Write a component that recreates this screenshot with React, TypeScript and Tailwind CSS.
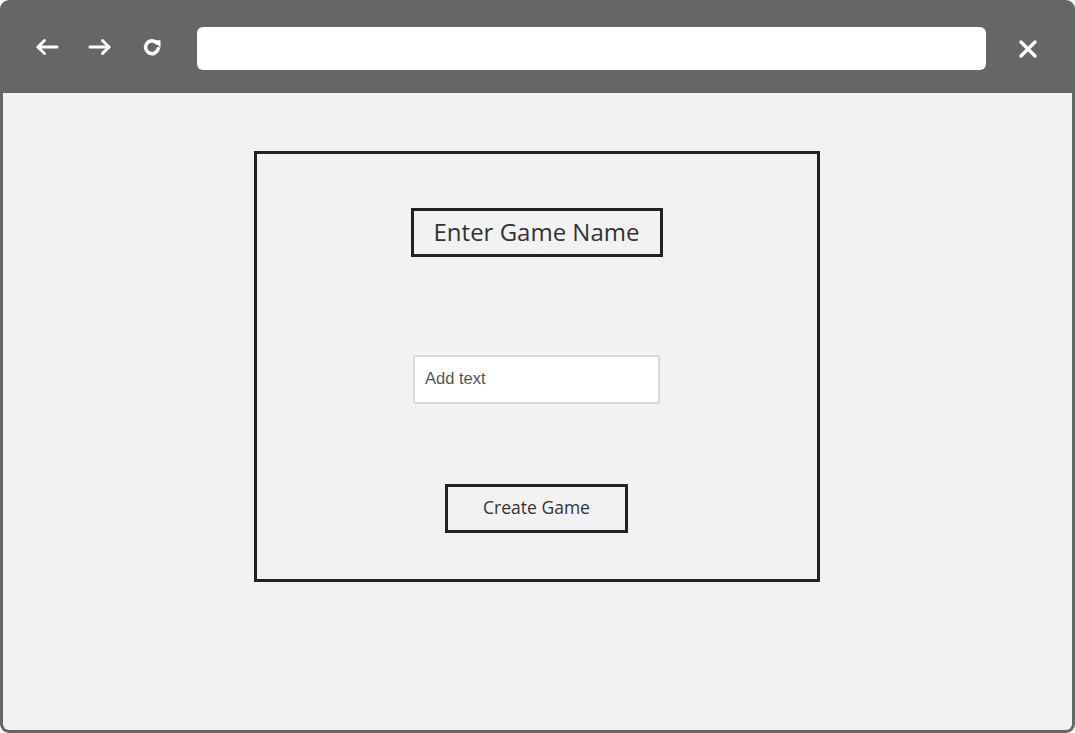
import { useState } from "react";

function ArrowLeft() {
  return (
    <svg width="24" height="20" viewBox="0 0 24 20" fill="none" stroke="white" strokeWidth="3" strokeLinecap="round" strokeLinejoin="round">
      <path d="M22 10H3" />
      <path d="M9.5 3.5L3 10l6.5 6.5" />
    </svg>
  );
}

function ArrowRight() {
  return (
    <svg width="24" height="20" viewBox="0 0 24 20" fill="none" stroke="white" strokeWidth="3" strokeLinecap="round" strokeLinejoin="round">
      <path d="M2 10h19" />
      <path d="M14.5 3.5L21 10l-6.5 6.5" />
    </svg>
  );
}

function Reload() {
  return (
    <svg width="22" height="22" viewBox="0 0 22 22" fill="none">
      <path d="M17.2 12.8A6.4 6.4 0 1 1 15.6 6.8" stroke="white" strokeWidth="3.6" strokeLinecap="round" />
      <path d="M12 4.2h7.5v7.5z" fill="white" />
    </svg>
  );
}

function Close() {
  return (
    <svg width="22" height="22" viewBox="0 0 22 22" fill="none" stroke="white" strokeWidth="3.4" strokeLinecap="round">
      <path d="M4 4l14 14M18 4L4 18" />
    </svg>
  );
}

export default function App() {
  const [name, setName] = useState("");

  return (
    <div className="w-[1075px] h-[733px] bg-white">
      <div className="w-full h-full flex flex-col bg-[#666666] rounded-[9px] p-[3px] pt-0">
        <div className="h-[93px] flex items-center shrink-0">
          <div className="flex items-center w-[194px] pl-[32px] gap-[29px]">
            <ArrowLeft />
            <ArrowRight />
            <Reload />
          </div>
          <div className="w-[789px] h-[43px] bg-white rounded-[6px] mt-[4px]" />
          <div className="flex-1 flex justify-center pt-[4px] pr-[2px]">
            <Close />
          </div>
        </div>
        <div className="flex-1 bg-[#f2f2f2] rounded-b-[6px] flex flex-col items-center pt-[58px]" style={{ fontFamily: "'Open Sans', sans-serif" }}>
          <div className="w-[566px] h-[431px] mr-[2px] border-[3px] border-[#222222] flex flex-col items-center pt-[54px]">
            <div className="w-[252px] h-[49px] border-[3px] border-[#222222] flex items-center justify-center text-[24px] text-[#333333] pb-[2px]">
              Enter Game Name
            </div>
            <input
              type="text"
              placeholder="Add text"
              value={name}
              onChange={(e) => setName(e.target.value)}
              className="mt-[98px] w-[247px] h-[49px] bg-white border-2 border-[#d9d9d9] rounded-[3px] px-[10px] pb-[2px] text-[16.5px] text-[#555555] placeholder:text-[#555555] outline-none"
              style={{ fontFamily: "'Liberation Sans', Arial, sans-serif" }}
            />
            <button className="mt-[80px] w-[183px] h-[49px] border-[3px] border-[#222222] flex items-center justify-center text-[17.5px] text-[#333333] pb-[3px]">
              Create Game
            </button>
          </div>
        </div>
      </div>
    </div>
  );
}
